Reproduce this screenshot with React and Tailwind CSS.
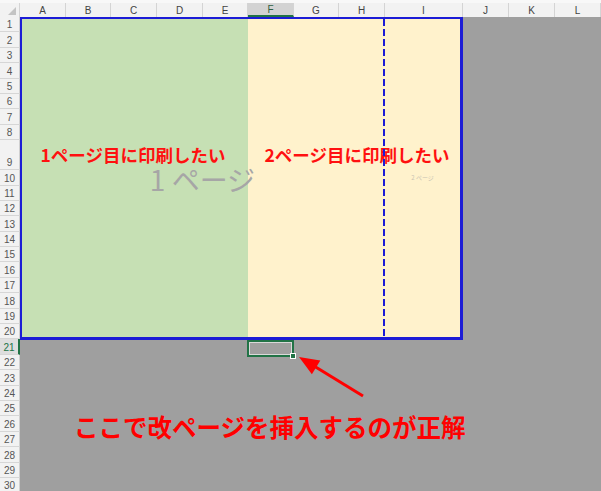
const cols = [
  { l: 'A', w: 'w-[46px]' },
  { l: 'B', w: 'w-[45px]' },
  { l: 'C', w: 'w-[46px]' },
  { l: 'D', w: 'w-[46px]' },
  { l: 'E', w: 'w-[45px]' },
  { l: 'F', w: 'w-[46px]', sel: true },
  { l: 'G', w: 'w-[45px]' },
  { l: 'H', w: 'w-[46px]' },
  { l: 'I', w: 'w-[78px]' },
  { l: 'J', w: 'w-[46px]' },
  { l: 'K', w: 'w-[46px]' },
  { l: 'L', w: 'w-[46px]' },
];

const rows = Array.from({ length: 30 }, (_, i) => i + 1);

const jp = { fontFamily: '"Noto Sans CJK JP", "Noto Sans", sans-serif' };
const ui = { fontFamily: '"Liberation Sans", Arial, sans-serif' };

export default function App() {
  return (
    <div className="w-[601px] h-[491px] overflow-hidden relative bg-[#9f9f9f] flex flex-col">
      <div className="h-[3px] shrink-0 bg-[#f8f8f8]" />
      <div className="h-[14px] shrink-0 flex bg-[#f2f2f2]" style={ui}>
        <div className="w-[20px] shrink-0 relative border-r border-[#d4d4d4]">
          <svg className="absolute right-[3px] bottom-[2px]" width="8" height="8" viewBox="0 0 8 8">
            <polygon points="8,0 8,8 0,8" fill="#c4c4c4" />
          </svg>
        </div>
        {cols.map((c) => (
          <div
            key={c.l}
            className={`${c.w} shrink-0 flex items-center justify-center text-[10px] border-r border-[#d4d4d4] ${
              c.sel ? 'bg-[#d3d3d3] text-[#2f5f42] border-b-2 border-b-[#217346]' : 'text-[#444444]'
            }`}
          >
            {c.l}
          </div>
        ))}
      </div>
      <div className="flex flex-1 min-h-0">
        <div className="w-[20px] shrink-0 flex flex-col bg-[#f2f2f2]" style={ui}>
          {rows.map((n) => (
            <div
              key={n}
              className={`${n === 9 ? 'h-[30px]' : 'h-[15.4px]'} shrink-0 flex items-end justify-center pb-[1px] text-[10px] leading-none border-b border-[#d6d6d6] ${
                n === 21 ? 'bg-[#dedede] text-[#217346] border-r-2 border-r-[#217346]' : 'text-[#555555] border-r border-r-[#d0d0d0]'
              }`}
            >
              {n}
            </div>
          ))}
        </div>
        <div className="flex-1 flex flex-col">
          <div className="w-[443px] h-[322.6px] shrink-0 flex relative border-t-2 border-l-2 border-r-[3px] border-b-[3px] border-[#1c1cd6]" style={jp}>
            <div className="w-[226px] bg-[#c6e0b4] flex flex-col">
              <div className="h-[121.2px]" />
              <div className="h-[30px] flex items-center justify-center pr-[4px] text-[17.5px] font-bold text-[#ff1010] leading-none">
                1ページ目に印刷したい
              </div>
            </div>
            <div className="flex-1 bg-[#fff2cc] flex flex-col">
              <div className="h-[121.2px]" />
              <div className="h-[30px] flex items-center justify-center pl-[6px] text-[17.5px] font-bold text-[#ff1010] leading-none">
                2ページ目に印刷したい
              </div>
            </div>
            <div className="absolute inset-0 flex">
              <div className="w-[361px] flex items-center justify-center pt-[3px] text-[28px] leading-none text-[#a6a6a6]">
                1 ページ
              </div>
              <div className="w-[2px] h-full bg-[image:repeating-linear-gradient(to_bottom,#1c1cd6_0px,#1c1cd6_7px,transparent_7px,transparent_10px)]" />
              <div className="flex-1 flex items-center justify-center text-[6px] leading-none text-[#c9c2b2]">
                2 ページ
              </div>
            </div>
          </div>
          <div className="ml-[227px] w-[47px] h-[17px] shrink-0 relative border-2 border-[#217346]">
            <div className="w-full h-full border border-[#d9d9d9]" />
            <div className="absolute -right-[4px] -bottom-[4px] w-[6px] h-[6px] bg-[#217346] border border-white" />
          </div>
        </div>
      </div>
      <svg className="absolute left-0 top-0 pointer-events-none" width="601" height="491" viewBox="0 0 601 491">
        <line x1="363" y1="396" x2="314" y2="366" stroke="#ff0000" strokeWidth="3" />
        <polygon points="299,357 320.3,360.6 311.9,374.2" fill="#ff0000" />
      </svg>
      <div className="absolute left-[74px] top-[415px] text-[24.5px] leading-none font-bold text-[#ff0000] whitespace-nowrap" style={jp}>
        ここで改ページを挿入するのが正解
      </div>
    </div>
  );
}
